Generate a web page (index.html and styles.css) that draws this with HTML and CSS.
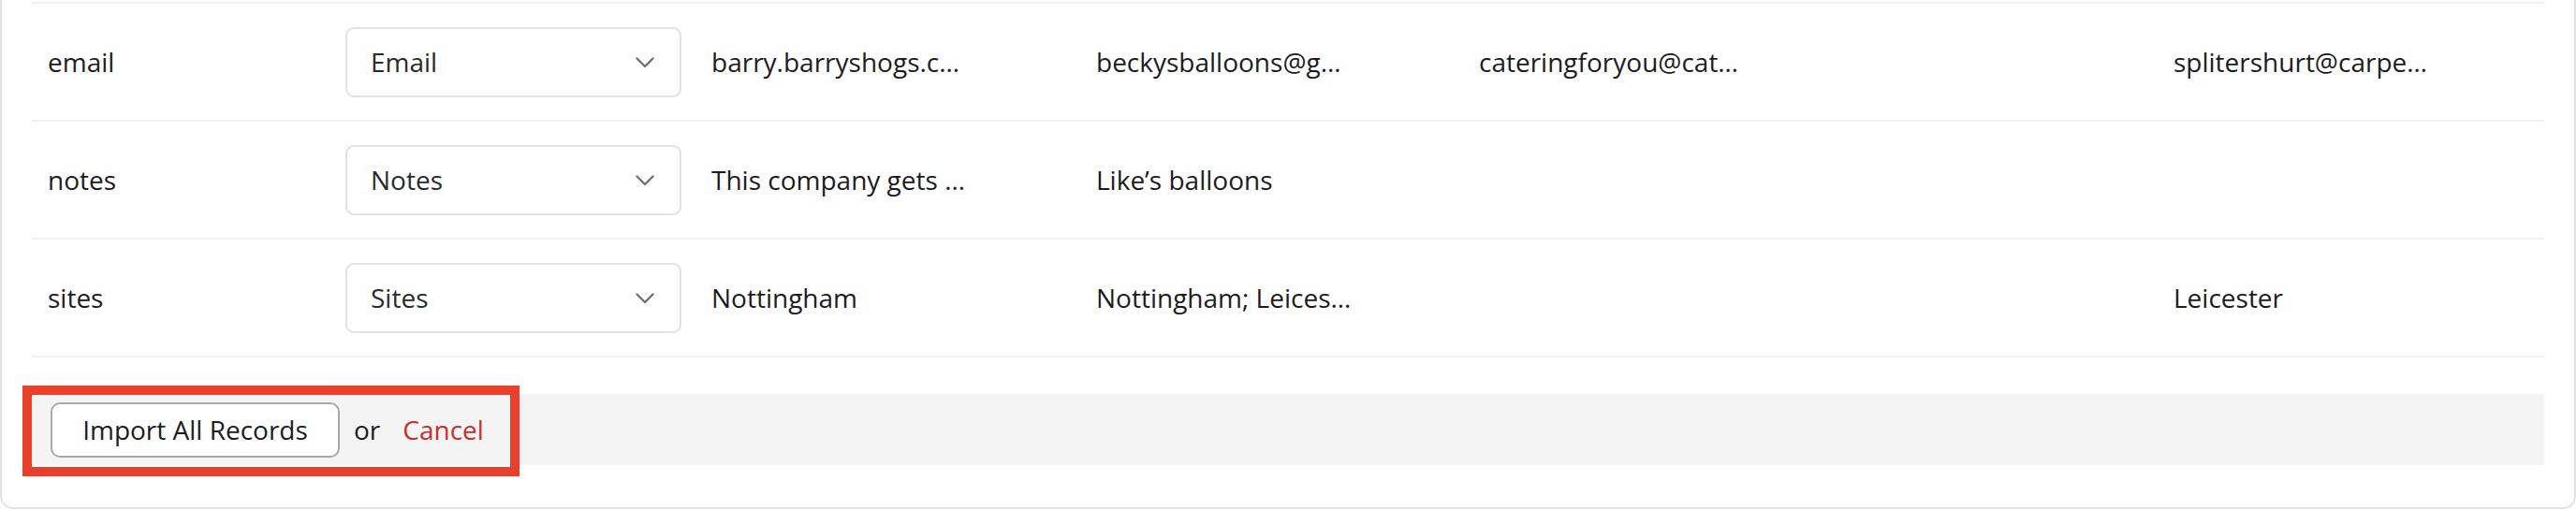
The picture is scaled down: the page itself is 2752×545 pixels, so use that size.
FILE: index.html
```html
<!DOCTYPE html>
<html lang="en">
<head>
<meta charset="utf-8">
<title>Import mapping</title>
<link rel="stylesheet" href="styles.css">
</head>
<body>
<div class="card">
  <div class="table">
    <div class="row">
      <div class="label">email</div>
      <div class="cell-select">
        <div class="select"><span>Email</span>
          <svg class="chev" width="20" height="12" viewBox="0 0 20 12"><polyline points="1.5,1.5 10,10 18.5,1.5" fill="none" stroke="#6f6f76" stroke-width="2.4" stroke-linecap="round" stroke-linejoin="round"/></svg>
        </div>
      </div>
      <div class="val v1">barry.barryshogs.c…</div>
      <div class="val v2">beckysballoons@g…</div>
      <div class="val v3">cateringforyou@cat…</div>
      <div class="val v4"></div>
      <div class="val v5">splitershurt@carpe…</div>
    </div>
    <div class="row">
      <div class="label">notes</div>
      <div class="cell-select">
        <div class="select"><span>Notes</span>
          <svg class="chev" width="20" height="12" viewBox="0 0 20 12"><polyline points="1.5,1.5 10,10 18.5,1.5" fill="none" stroke="#6f6f76" stroke-width="2.4" stroke-linecap="round" stroke-linejoin="round"/></svg>
        </div>
      </div>
      <div class="val v1">This company gets …</div>
      <div class="val v2">Like’s balloons</div>
      <div class="val v3"></div>
      <div class="val v4"></div>
      <div class="val v5"></div>
    </div>
    <div class="row">
      <div class="label">sites</div>
      <div class="cell-select">
        <div class="select"><span>Sites</span>
          <svg class="chev" width="20" height="12" viewBox="0 0 20 12"><polyline points="1.5,1.5 10,10 18.5,1.5" fill="none" stroke="#6f6f76" stroke-width="2.4" stroke-linecap="round" stroke-linejoin="round"/></svg>
        </div>
      </div>
      <div class="val v1">Nottingham</div>
      <div class="val v2">Nottingham; Leices…</div>
      <div class="val v3"></div>
      <div class="val v4"></div>
      <div class="val v5">Leicester</div>
    </div>
  </div>
  <div class="footer">
    <button class="btn">Import All Records</button>
    <span class="or">or</span>
    <a class="cancel" href="#">Cancel</a>
    <div class="highlight"></div>
  </div>
</div>
</body>
</html>
```
FILE: styles.css
```css
html, body {
  margin: 0;
  padding: 0;
  background: #ffffff;
}
body {
  font-family: "Open Sans", "Noto Sans", sans-serif;
  font-size: 28px;
  color: #1c1c1f;
  height: 545px;
  overflow: hidden;
}
.card {
  box-sizing: border-box;
  width: 2752px;
  height: 544px;
  border: 2px solid #e4e4e7;
  border-top: none;
  border-radius: 0 0 14px 14px;
  padding: 2px 32px 0 31px;
}
.table {
  border-bottom: 2px solid #f1f1f4;
}
.row {
  display: grid;
  grid-template-columns: 336px 391px 411px 409px 409px 333px 1fr;
  align-items: center;
  height: 124px;
  border-top: 2px solid #f1f1f4;
}
.label {
  padding-left: 18px;
}
.select {
  box-sizing: border-box;
  width: 359px;
  height: 75px;
  border: 2px solid #e2e2e6;
  border-radius: 9px;
  display: flex;
  align-items: center;
  justify-content: space-between;
  padding: 0 27px 0 25px;
  color: #2a2a2d;
  background: #fff;
}
.chev {
  display: block;
  margin-top: 2px;
}
.val {
  white-space: nowrap;
  overflow: hidden;
}
.footer {
  position: relative;
  margin-top: 39px;
  height: 76px;
  background: #f4f4f4;
  display: flex;
  align-items: center;
  padding-left: 21px;
}
.btn {
  box-sizing: border-box;
  width: 309px;
  height: 59px;
  border: 2px solid #a7a7ae;
  border-radius: 10px;
  background: #ffffff;
  font-family: "Open Sans", "Noto Sans", sans-serif;
  font-size: 28px;
  color: #1c1c1f;
  padding: 0;
  margin-right: 15px;
}
.or {
  color: #1c1c1f;
  margin-right: 24px;
}
.cancel {
  color: #c7302f;
  text-decoration: none;
}
.highlight {
  position: absolute;
  left: -9px;
  top: -9px;
  width: 531px;
  height: 97px;
  box-sizing: border-box;
  border: 10px solid #e8402a;
  pointer-events: none;
}
```
